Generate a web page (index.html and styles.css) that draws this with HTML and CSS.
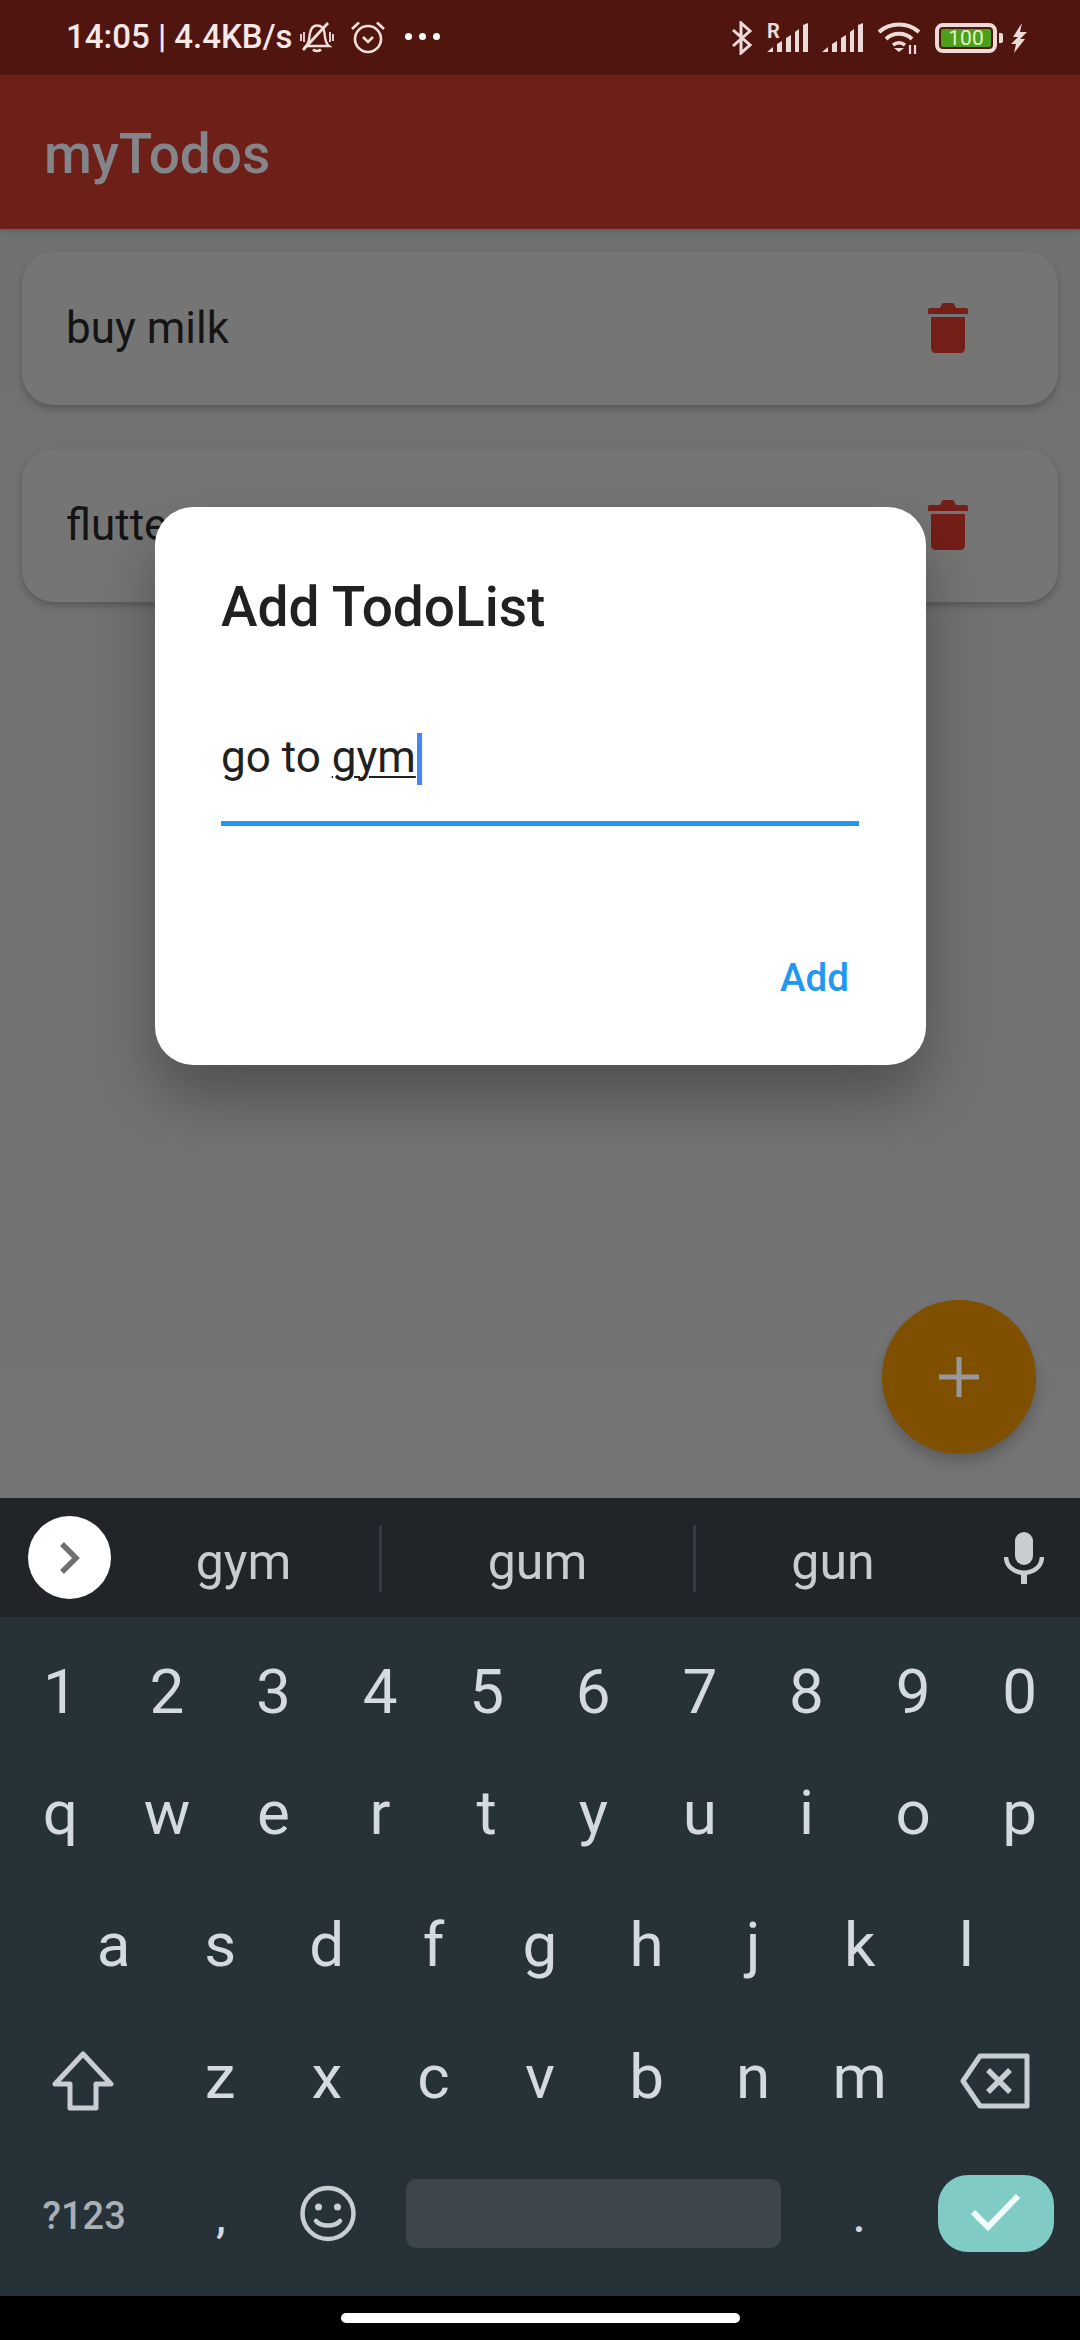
FILE: index.html
```html
<!DOCTYPE html>
<html lang="en">
<head>
    <meta charset="UTF-8">
    <meta name="viewport" content="width=device-width, initial-scale=1.0">
    <title>myTodos</title>
    <link rel="stylesheet" href="styles.css">
</head>
<body>
    <div class="phone">

        <div class="status">
            <div class="status-left">
                <span class="clock">14:05 | 4.4KB/s</span>
                <svg class="ic-bell" width="34" height="32" viewBox="0 0 34 32" fill="none" stroke="#f0dedb" stroke-width="2.4">
                    <path d="M6 25 C10 21 9 16 10 12 C11 7 14 4.500 17 4.500 C21 4.500 24 7 24.500 12 C25 17 25 22 29 25 Z"/>
                    <path d="M13 28.500 C15 30.500 19 30.500 21 28.500" stroke-width="2.600"/>
                    <path d="M1 13v7M4 11v10M30 11v10M33 13v7" stroke-width="1.800"/>
                    <path d="M3 29 L28 2" stroke-width="2.800"/>
                </svg>
                <svg class="ic-alarm" width="34" height="34" viewBox="0 0 34 34" fill="none" stroke="#f0dedb" stroke-width="2.600">
                    <circle cx="17" cy="19" r="13"/>
                    <path d="M1 9 L8 2.500M33 9 L26 2.500"/>
                    <path d="M12 17 L17 22 L22 17"/>
                </svg>
                <div class="dots"><i></i><i></i><i></i></div>
            </div>
            <div class="status-right">
                <svg width="22" height="34" viewBox="0 0 22 34" fill="none" stroke="#ecdcd9" stroke-width="3">
                    <path d="M2 9 L19 24 L10 32 V2 L19 10 L2 25"/>
                </svg>
                <div class="signal-wrap">
                    <span class="roam">R</span>
                    <svg class="ic-signal" width="41" height="32" viewBox="0 0 41 32" fill="#ecdcd9">
                        <path d="M0 30 L6 25 V30 Z M10 22 L15 19 V30 H10 Z M19 16 L24 13 V30 H19 Z M28 10 L32 7 V30 H28 Z M36 3 L41 1 V30 H36 Z"/>
                    </svg>
                </div>
                <svg class="ic-signal" width="41" height="32" viewBox="0 0 41 32" fill="#ecdcd9">
                    <path d="M0 30 L6 25 V30 Z M10 22 L15 19 V30 H10 Z M19 16 L24 13 V30 H19 Z M28 10 L32 7 V30 H28 Z M36 3 L41 1 V30 H36 Z"/>
                </svg>
                <svg class="ic-wifi" width="46" height="34" viewBox="0 0 46 34" fill="none" stroke="#ecdcd9" stroke-width="4">
                    <path d="M2 11 C13 1 31 1 42 11"/>
                    <path d="M9 18 C16 11 28 11 35 18"/>
                    <path d="M16 24 C20 21 24 21 28 24" stroke-width="3.500"/>
                    <path d="M22 31 L17 27 H27 Z" fill="#ecdcd9" stroke="none"/>
                    <path d="M33 24v9M38 24v9" stroke-width="2.200"/>
                </svg>
                <div class="battery">
                    <div class="battery-body"><span>100</span></div>
                    <i class="battery-tip"></i>
                </div>
                <svg width="16" height="30" viewBox="0 0 16 30" fill="#ecdcd9">
                    <path d="M11 0 L2 14 L7 14 L0 21 L5 21 L3 30 L14 16 L9 16 L16 9 L9 9 Z"/>
                </svg>
            </div>
        </div>

        <div class="appbar">myTodos</div>

        <div class="todos">
            <div class="card">
                <span>buy milk</span>
                <svg class="trash" width="40" height="50" viewBox="0 0 40 50">
                    <path d="M0 11 V7 Q0 5 2 5 H12 L14 1 Q14.500 0 16 0 H24 Q25.500 0 26 1 L28 5 H38 Q40 5 40 7 V11 Z"/>
                    <path d="M3 14 H37 V45 Q37 50 32 50 H8 Q3 50 3 45 Z"/>
                </svg>
            </div>
            <div class="card">
                <span>flutter</span>
                <svg class="trash" width="40" height="50" viewBox="0 0 40 50">
                    <path d="M0 11 V7 Q0 5 2 5 H12 L14 1 Q14.500 0 16 0 H24 Q25.500 0 26 1 L28 5 H38 Q40 5 40 7 V11 Z"/>
                    <path d="M3 14 H37 V45 Q37 50 32 50 H8 Q3 50 3 45 Z"/>
                </svg>
            </div>
        </div>

        <div class="fab">
            <svg width="40" height="40" viewBox="0 0 40 40" fill="#98989c">
                <path d="M17.500 0 H22.500 V17.500 H40 V22.500 H22.500 V40 H17.500 V22.500 H0 V17.500 H17.500 Z"/>
            </svg>
        </div>

        <div class="dialog">
            <h2>Add TodoList</h2>
            <div class="field">
                <span>go to <u>gym</u></span><i class="caret"></i>
            </div>
            <div class="actions">Add</div>
        </div>

        <div class="keyboard">
            <div class="suggest">
                <div class="more">
                    <svg width="20" height="32" viewBox="0 0 20 32" fill="none" stroke="#6f6f6f" stroke-width="5.500">
                        <path d="M2 2 L16 16 L2 30"/>
                    </svg>
                </div>
                <div class="word word-a">gym</div>
                <div class="word word-b">gum</div>
                <div class="word word-c">gun</div>
                <svg class="mic" width="40" height="52" viewBox="0 0 40 52">
                    <rect x="11" y="0" width="18" height="33" rx="9" fill="#c9ccd0"/>
                    <path d="M2 25 C3 46 37 46 38 25" fill="none" stroke="#c9ccd0" stroke-width="4.500"/>
                    <rect x="17" y="39" width="6" height="13" fill="#c9ccd0"/>
                </svg>
            </div>

            <div class="row row-digits">
                <span class="key">1</span><span class="key">2</span><span class="key">3</span><span class="key">4</span><span class="key">5</span><span class="key">6</span><span class="key">7</span><span class="key">8</span><span class="key">9</span><span class="key">0</span>
            </div>
            <div class="row row-qwerty">
                <span class="key">q</span><span class="key">w</span><span class="key">e</span><span class="key">r</span><span class="key">t</span><span class="key">y</span><span class="key">u</span><span class="key">i</span><span class="key">o</span><span class="key">p</span>
            </div>
            <div class="row row-home">
                <span class="key">a</span><span class="key">s</span><span class="key">d</span><span class="key">f</span><span class="key">g</span><span class="key">h</span><span class="key">j</span><span class="key">k</span><span class="key">l</span>
            </div>
            <div class="row row-shift">
                <span class="key-side shift">
                    <svg width="62" height="60" viewBox="0 0 62 60" fill="none" stroke="#c9ced3" stroke-width="5" stroke-linejoin="round">
                        <path d="M31 3 L59 33 H44 V57 H18 V33 H3 Z"/>
                    </svg>
                </span>
                <span class="key">z</span><span class="key">x</span><span class="key">c</span><span class="key">v</span><span class="key">b</span><span class="key">n</span><span class="key">m</span>
                <span class="key-side back">
                    <svg width="70" height="56" viewBox="0 0 70 56" fill="none" stroke="#c9ced3" stroke-width="5" stroke-linejoin="round">
                        <path d="M3 28 L20 3 H67 V53 H20 Z"/>
                        <path d="M28 17 L50 39 M50 17 L28 39" stroke-width="5.500"/>
                    </svg>
                </span>
            </div>
            <div class="row row-bottom">
                <span class="key-side sym">?123</span>
                <span class="key comma">,</span>
                <span class="key">
                    <svg width="56" height="57" viewBox="0 0 56 57" fill="none" stroke="#c9ced3" stroke-width="4.500">
                        <circle cx="28" cy="28.500" r="25.500"/>
                        <circle cx="18.500" cy="22" r="3.500" fill="#c9ced3" stroke="none"/>
                        <circle cx="37.500" cy="22" r="3.500" fill="#c9ced3" stroke="none"/>
                        <path d="M16 36 C21 42 35 42 40 36" stroke-linecap="round"/>
                    </svg>
                </span>
                <span class="space"></span>
                <span class="key period">.</span>
                <span class="key-side">
                    <span class="enter">
                        <svg width="50" height="40" viewBox="0 0 50 40" fill="none" stroke="#f3fbfa" stroke-width="6">
                            <path d="M2 19 L17 34 L47 3"/>
                        </svg>
                    </span>
                </span>
            </div>
        </div>

        <div class="navbar"><i></i></div>
    </div>
</body>
</html>
```

FILE: styles.css
```css
*{
    padding: 0;
    margin: 0;
    box-sizing: border-box;
}

body{
    background-color: black;
    font-family: Roboto, "Liberation Sans", sans-serif;
}

.phone{
    position: relative;
    width: 1080px;
    height: 2340px;
    overflow: hidden;
    display: flex;
    flex-direction: column;
    background-color: #737373;
}

/* status bar */
.status{
    height: 75px;
    flex: none;
    padding: 0 53px 0 66px;
    display: flex;
    justify-content: space-between;
    align-items: center;
    background-color: #51150f;
    color: #f5e8e6;
}

.status-left, .status-right{
    display: flex;
    align-items: center;
}

.status-left{
    margin-top: -2px;
}

.clock{
    font-size: 33px;
    font-weight: 500;
    margin-right: 7px;
}

.ic-bell{
    margin-right: 17px;
}

.dots{
    display: flex;
    gap: 7px;
    margin-left: 20px;
}

.dots i{
    width: 7px;
    height: 7px;
    border-radius: 50%;
    background-color: white;
}

.status-right svg{
    margin-right: 14px;
}

.signal-wrap{
    position: relative;
    height: 32px;
    margin-right: 14px;
}

.signal-wrap svg{
    margin-right: 0;
    display: block;
}

.roam{
    position: absolute;
    left: 0;
    top: -3px;
    font-size: 20px;
    font-weight: 700;
    color: #ecdcd9;
}

.status-right .ic-wifi{
    margin-right: 12px;
}

.status-right svg:last-child{
    margin-right: 0;
}

.battery{
    display: flex;
    align-items: center;
    margin-right: 8px;
}

.battery-body{
    width: 62px;
    height: 30px;
    border: 4px solid #ecdcd9;
    border-radius: 8px;
    padding: 2px;
    display: flex;
}

.battery-body span{
    flex: 1;
    background-color: #4f9e1a;
    border-radius: 2px;
    color: #dcf5cc;
    font-size: 21px;
    line-height: 18px;
    text-align: center;
}

.battery-tip{
    width: 4px;
    height: 10px;
    margin-left: 2px;
    background-color: #ecdcd9;
    border-radius: 0 2px 2px 0;
}

/* app bar */
.appbar{
    height: 154px;
    flex: none;
    padding: 4px 44px 0;
    display: flex;
    align-items: center;
    background-color: #6d1f18;
    color: #84858a;
    font-size: 55px;
    font-weight: 500;
    box-shadow: 0 2px 6px rgba(0, 0, 0, .18);
    position: relative;
}

/* list */
.todos{
    flex: 1;
    padding: 23px 22px;
    display: flex;
    flex-direction: column;
    gap: 44px;
    background: linear-gradient(#707272, #727272 40%, #797979);
}

.card{
    height: 153px;
    padding: 0 90px 1px 44px;
    display: flex;
    justify-content: space-between;
    align-items: center;
    background-color: #757575;
    border-radius: 32px;
    box-shadow: 0 4px 7px rgba(0, 0, 0, .22);
    color: #141414;
    font-size: 44px;
}

.trash{
    fill: #741f18;
}

.fab{
    position: absolute;
    left: 882px;
    top: 1300px;
    width: 154px;
    height: 154px;
    border-radius: 50%;
    display: flex;
    align-items: center;
    justify-content: center;
    background-color: #7f5000;
    box-shadow: 0 8px 14px rgba(0, 0, 0, .2);
}

/* dialog */
.dialog{
    position: absolute;
    left: 155px;
    top: 507px;
    width: 771px;
    height: 558px;
    padding: 68px 67px 0 66px;
    background-color: white;
    border-radius: 38px;
    box-shadow: 0 32px 60px rgba(0, 0, 0, .3);
    color: #212121;
}

.dialog h2{
    font-size: 55px;
    font-weight: 500;
    line-height: 64px;
}

.field{
    height: 118px;
    margin-top: 69px;
    padding-top: 25px;
    display: flex;
    align-items: flex-start;
    border-bottom: 5px solid #2196f3;
    font-size: 44px;
    line-height: 52px;
}

.field span{
    margin-top: -2px;
}

.field u{
    text-decoration-thickness: 2px;
    text-underline-offset: 4px;
}

.caret{
    width: 5px;
    height: 52px;
    margin-left: 1px;
    background-color: #4285f4;
}

.actions{
    margin-top: 129px;
    padding-right: 10px;
    text-align: right;
    color: #2196f3;
    font-size: 38.500px;
    font-weight: 500;
}

/* keyboard */
.keyboard{
    position: absolute;
    left: 0;
    top: 1498px;
    width: 1080px;
    height: 798px;
    background-color: #263238;
    color: #d5dae0;
}

.suggest{
    position: relative;
    height: 119px;
    background-color: #212529;
    color: #c8ccd1;
    font-size: 50px;
}

.more{
    position: absolute;
    left: 28px;
    top: 18px;
    width: 83px;
    height: 83px;
    border-radius: 50%;
    background-color: white;
    display: flex;
    align-items: center;
    justify-content: center;
}

.word{
    position: absolute;
    top: 27px;
    height: 67px;
    line-height: 74px;
    text-align: center;
}

.word-a{
    left: 108px;
    width: 274px;
    border-right: 3px solid #343a40;
}

.word-b{
    left: 382px;
    width: 314px;
    border-right: 3px solid #343a40;
}

.word-c{
    left: 696px;
    width: 274px;
}

.mic{
    position: absolute;
    left: 1004px;
    top: 34px;
}

.row{
    height: 128px;
    display: flex;
    justify-content: center;
    align-items: center;
    font-size: 62px;
}

.row-digits{
    margin-top: 10px;
    font-size: 62px;
}

.row-qwerty{
    margin-top: -7px;
}

.row-home{
    margin-top: 4px;
}

.row-shift{
    margin-top: 4px;
}

.key{
    width: 106.600px;
    flex: none;
    display: flex;
    justify-content: center;
    align-items: center;
}

.key-side{
    width: 167px;
    flex: none;
    display: flex;
    justify-content: center;
    align-items: center;
}

.shift, .back{
    padding-top: 9px;
}

.back{
    padding-right: 4px;
}

.row-bottom{
    margin-top: 3px;
    height: 140px;
}

.sym{
    font-size: 38px;
    font-weight: 500;
    color: #a9b0b6;
    padding-top: 6px;
}

.comma, .period{
    font-size: 44px;
    padding-top: 8px;
    font-weight: 500;
}

.space{
    width: 375px;
    height: 69px;
    margin: 0 25px;
    flex: none;
    background-color: #3c464c;
    border-radius: 10px;
}

.enter{
    width: 116px;
    height: 77px;
    border-radius: 30px;
    background-color: #80cbc4;
    display: flex;
    align-items: center;
    justify-content: center;
}

/* nav */
.navbar{
    position: absolute;
    left: 0;
    top: 2296px;
    width: 1080px;
    height: 44px;
    background-color: black;
    display: flex;
    justify-content: center;
    padding-top: 17px;
}

.navbar i{
    width: 399px;
    height: 10px;
    border-radius: 5px;
    background-color: white;
}
```
